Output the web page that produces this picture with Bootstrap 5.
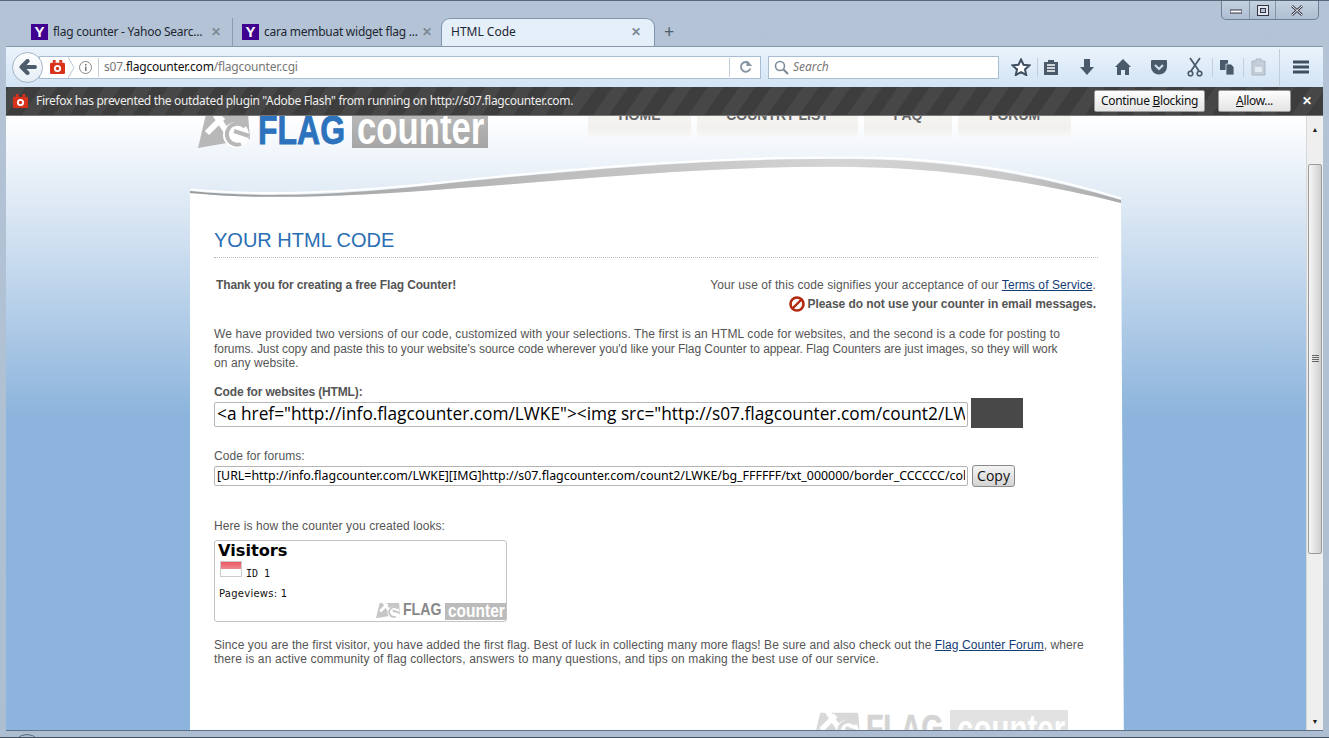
<!DOCTYPE html>
<html lang="en">
<head>
<meta charset="utf-8">
<title>HTML Code</title>
<link rel="stylesheet" href="https://cdn.jsdelivr.net/npm/bootstrap@5.3.0/dist/css/bootstrap.min.css">
<style>
html,body{height:100%;overflow:hidden}
body{font-family:"Liberation Sans",Arial,sans-serif;font-size:12px;color:#555;background:#aebfd3}
.win{width:1329px;height:738px;padding:0 6px 7px;position:relative;background:linear-gradient(#b4c4d6,#aebed2);border-top:1px solid #56677a;border-bottom:1px solid #45525f;overflow:hidden}
.ui{font-family:"Noto Sans","Open Sans",sans-serif}
.winctl{height:19px;width:98px;margin-left:1215px;border:1px solid #6d7f92;border-top:0;border-radius:0 0 5px 5px;background:linear-gradient(#c4d1df,#aebed2)}
.winctl>span{border-right:1px solid #8394a6;height:100%}
.winctl>span:last-child{border:0}
.tabs{height:28px;margin-top:-2px;padding-left:16px;color:#1d2733;font-size:12px}
.ftab{height:28px;width:210px;padding:5px 0 0 9px;white-space:nowrap;letter-spacing:-.26px}
.ftab+.ftab{border-left:1px solid #8d9cad}
.ftab.on{width:214px;margin-left:-1px;background:#e5eff9;border:1px solid #8196ab;border-bottom:0;border-radius:9px 9px 0 0;padding-left:9px;padding-top:4px;letter-spacing:0}
.ytxt{width:17px;height:16px;margin-top:1px;background:#400090;color:#fff;font:700 15px/16px "Liberation Sans",sans-serif;text-align:center;letter-spacing:0}
.tt{width:158px;margin-left:5px;overflow:hidden}
.xx{color:#7d8894;font-size:12px;font-weight:700;line-height:18px;letter-spacing:0}
.plus{margin-left:9px;font-size:18px;line-height:26px;color:#4e5e6e}
.tbar{height:41px;background:linear-gradient(#eaf3fc,#d3e4f5);border-top:1px solid #8497ab;padding:0 0 0 6px}
.backb{width:31px;height:31px;border-radius:50%;background:linear-gradient(#fff,#e4edf6);border:1px solid #a3b3c3;flex:none;z-index:1}
.urlb{height:23px;width:722px;margin-left:-4px;padding-left:10px;background:#fff;border:1px solid #a9bdd2;font-size:12px;color:#777;letter-spacing:-.2px}
.urlb b{font-weight:400;color:#111}
.sep{width:1px;height:19px;background:#c3ced9;flex:none}
.srch{width:231px;height:23px;margin-left:7px;background:#fff;border:1px solid #a9bdd2;font-style:italic;color:#777;font-size:12px;padding-left:5px}
.tools{margin-left:12px}
.tools svg{display:block;flex:none}
.noti{height:29px;background:repeating-linear-gradient(-55deg,#3d3d3d 0 13px,#474747 13px 26px);color:#eee;font-size:12px;padding:0 11px 0 7px;white-space:nowrap;border-bottom:1px solid #777;letter-spacing:-.33px}
.nbtn{height:22px;padding:0;font-size:12px;line-height:20px;border-radius:2px;background:linear-gradient(#fdfdfd,#e4e4e4);border:1px solid #999;color:#111;font-family:inherit;letter-spacing:-.33px}
.view{height:615px;overflow:hidden;border-bottom:1px solid #5f7286}
.pg{flex:1;min-width:0;background:linear-gradient(#fff,#8cb4dc 300px);overflow:hidden}
.sb{width:17px;background:#efefef;flex:none;border-left:1px solid #d8d8d8;color:#222;font-size:7px;text-align:center}
.thumb{height:390px;margin:0 1px;background:linear-gradient(90deg,#f6f6f6,#cfcfcf);border:1px solid #9a9a9a;border-radius:2px}
.top{height:47px;margin-top:-8px;padding-left:192px}
.logo{white-space:nowrap;overflow:hidden}
.fl{font-family:"Liberation Sans",sans-serif;font-weight:700;overflow:hidden;flex:none}
.sq{display:inline-block;width:max-content;transform-origin:0 50%}
.l1{height:40px;line-height:40px}
.l1 .fl1{color:#2c72bc;width:86px;margin-left:8px;font-size:40px;margin-top:2px;-webkit-text-stroke:.8px #2c72bc}
.l1 .fl1 .sq{transform:scaleX(.8)}
.l1 .fl2{color:#fff;background:linear-gradient(#bbb,#a6a6a6);width:136px;margin-left:8px;padding-left:5px;font-size:46px}
.l1 .fl2 .sq{transform:scaleX(.755)}
.menu{margin-left:100px;gap:6px}
.mi{height:29px;background:linear-gradient(#f6f5f3,#f2f1ee 70%,#f8f8f8);color:#666;font-weight:700;font-size:14px;line-height:14px;text-align:center}
.wrap{width:934px;margin-left:184px}
.wrap svg.curve{display:block}
.panel{background:#fff;padding:23px 26px 0 24px;height:560px;clip-path:polygon(0 0,931px 0,934px 100%,0 100%);overflow:hidden}
.ttl{font-size:20px;line-height:24px;color:#2a6eb4;font-weight:400;margin:0;padding-bottom:5px;border-bottom:1px dotted #bbb}
.txt{line-height:14px;letter-spacing:.085px}
.txt.fw-bold{letter-spacing:-.14px}
.txt.wide{letter-spacing:-.06px}
.ln1{letter-spacing:.11px}
.ln2{letter-spacing:-.055px}
.ln3{letter-spacing:.13px}
.cd{height:25px;width:754px;border:1px solid #b5b5b5;border-radius:2px;padding:0 2px;font-family:"Open Sans","Noto Sans",sans-serif;font-size:17.300px;color:#000;box-shadow:none;background:#fff;margin-top:3px}
.cd2{height:20px;font-size:12.400px;font-family:"Noto Sans","Open Sans",sans-serif;margin-top:0}
.blk{width:52px;height:30px;background:#484848;margin-left:3px}
.cp{height:22px;width:43px;margin-left:4px;padding:0;font-size:14px;line-height:18px;font-family:"Open Sans",sans-serif;background:linear-gradient(#f4f4f4,#d4d4d4);border:1px solid #8a8a8a;border-radius:3px;color:#111}
.cbox{width:293px;height:82px;border:1px solid #c4c4c4;border-radius:3px;padding:0 0 0 3px;font-family:"DejaVu Sans",sans-serif;color:#111}
.cv{font-size:16.200px;line-height:20px;font-weight:700;color:#000}
.flag{width:22px;height:16px;margin:0 4px 0 2px;border:1px solid #ccc;background:linear-gradient(#ea5763,#ee8a90 50%,#fff 50%)}
.mono{font-family:"DejaVu Sans Mono",monospace;font-size:10px;margin-top:7px;line-height:12px}
.pv{font-size:10px;line-height:12px;letter-spacing:.25px}
.l2{height:21px;line-height:20px;align-self:flex-end}
.l2 .fl1{color:#888;width:38px;margin-left:3px;font-size:17px}
.l2 .fl1 .sq{transform:scaleX(.83)}
.l2 .fl2{color:#fff;background:#bbb;width:61px;margin-left:4px;padding-left:3px;height:17px;line-height:16px;margin-top:3px;font-size:18px}
.l2 .fl2 .sq{transform:scaleX(.86)}
.l3{height:44px;margin-right:30px}
.l3 .fl1{color:#d4d4d4;width:79px;margin-left:6px;font-size:36px;line-height:34px;height:44px;padding-top:6px;-webkit-text-stroke:.6px #d4d4d4}
.l3 .fl1 .sq{transform:scaleX(.79)}
.l3 .fl2{color:#fff;background:#e2e2e2;width:118px;margin-left:5px;margin-top:4px;padding-left:7px;font-size:41px;line-height:38px}
.l3 .fl2 .sq{transform:scaleX(.72)}
a.lk{color:#143c74}
.arcb{position:absolute;left:12px;top:733px;width:30px;height:30px;border:1px solid #56677a;border-radius:50%}
</style>
</head>
<body>
<svg width="0" height="0" class="d-block" style="position:absolute">
<symbol id="wing" viewBox="0 0 52 34"><path d="M0 34 8 0 50 0 52 25 0 34z" fill="currentColor"/><path d="M15-3 33 24M25 3 9 19" stroke="#fff" stroke-width="6" fill="none"/><circle cx="38" cy="21" r="13" fill="#fff"/><path d="M47 13A10.500 10.500 0 1 0 43 30" fill="none" stroke="currentColor" stroke-width="4"/><path d="M36 17 51 22" stroke="currentColor" stroke-width="4"/></symbol>
<symbol id="ffi" viewBox="0 0 16 16"><rect x="0" y="3" width="16" height="12" rx="1.500" fill="#d9321c"/><rect x="3" y="0" width="3" height="3" fill="#d9321c"/><rect x="10" y="0" width="3" height="3" fill="#d9321c"/><circle cx="8" cy="9" r="3.800" fill="#fff"/><circle cx="8" cy="9" r="1.800" fill="#d9321c"/></symbol>
</svg>
<div class="win">
  <div class="winctl d-flex">
    <span class="d-flex align-items-center justify-content-center" style="width:28px"><svg width="12" height="8"><rect x="0" y="4" width="12" height="3" fill="#fff" stroke="#334"/></svg></span>
    <span class="d-flex align-items-center justify-content-center" style="width:26px"><svg width="12" height="11"><rect x=".5" y=".5" width="11" height="10" fill="#dfe6ee" stroke="#334"/><rect x="3.500" y="3.500" width="5" height="4" fill="#b4c4d6" stroke="#334"/></svg></span>
    <span class="d-flex align-items-center justify-content-center flex-grow-1"><svg width="12" height="11"><path d="M1 1l10 9M11 1 1 10" stroke="#334" stroke-width="2.400"/><path d="M1 1l10 9M11 1 1 10" stroke="#fff" stroke-width="1"/></svg></span>
  </div>
  <div class="tabs ui d-flex align-items-start">
    <div class="ftab d-flex"><span class="ytxt flex-none">Y</span><span class="tt">flag counter - Yahoo Searc...</span><span class="xx">✕</span></div>
    <div class="ftab d-flex"><span class="ytxt flex-none">Y</span><span class="tt">cara membuat widget flag ...</span><span class="xx">✕</span></div>
    <div class="ftab on d-flex"><span class="tt" style="width:180px;margin-left:0">HTML Code</span><span class="xx">✕</span></div>
    <span class="plus">+</span>
  </div>
  <div class="tbar ui d-flex align-items-center">
    <div class="backb d-flex align-items-center justify-content-center"><svg width="18" height="16" viewBox="0 0 18 16"><path d="M8.500 2 2.500 8l6 6M3 8h13" fill="none" stroke="#4d5d6e" stroke-width="4" stroke-linejoin="round" stroke-linecap="round"/></svg></div>
    <div class="urlb d-flex align-items-center">
      <svg width="15" height="15" class="flex-none"><use href="#ffi"/></svg>
      <svg width="7" height="21" class="flex-none" style="margin:0 3px"><path d="M0 0l6 10.500-6 10.500" fill="none" stroke="#bcc7d2"/></svg>
      <svg width="15" height="15" viewBox="0 0 15 15" class="flex-none"><circle cx="7.500" cy="7.500" r="6" fill="none" stroke="#8a8a8a"/><rect x="7" y="6.500" width="1.500" height="4.500" fill="#777"/><rect x="7" y="4" width="1.500" height="1.500" fill="#777"/></svg>
      <span class="sep" style="margin-left:5px"></span>
      <span class="flex-grow-1" style="margin-left:5px"><span>s07.</span><b>flagcounter.com</b><span>/flagcounter.cgi</span></span>
      <span class="sep"></span>
      <svg width="30" height="16" viewBox="0 0 31 16"><path d="M20 4.500a5 5 0 1 0 1 5" fill="none" stroke="#8896a3" stroke-width="2"/><path d="M17 1v6h6z" fill="#8896a3"/></svg>
    </div>
    <div class="srch d-flex align-items-center"><svg width="15" height="15" viewBox="0 0 15 15" class="me-1"><circle cx="6" cy="6" r="4.500" fill="none" stroke="#7e8c9a" stroke-width="1.600"/><path d="M9.500 9.500l4.500 4.500" stroke="#7e8c9a" stroke-width="2.200"/></svg>Search</div>
    <div class="tools d-flex align-items-center">
      <svg width="20" height="18" viewBox="0 0 20 18"><path d="M10 1.500l2.500 5.200 5.800.7-4.300 4 1.200 5.600L10 14.200 4.800 17l1.200-5.600-4.300-4 5.800-.7z" fill="#fff" stroke="#3f4f60" stroke-width="2"/></svg>
      <span class="sep" style="margin:0 5px 0 6px"></span>
      <svg width="16" height="18" viewBox="0 0 16 18"><path d="M1 4h4V2h6v2h4v13H1z" fill="#4a5a6b"/><path d="M4 7h8M4 10h8M4 13h8" stroke="#fff" stroke-width="1.400"/></svg>
      <svg width="16" height="18" viewBox="0 0 16 18" style="margin-left:20px"><path d="M5 1h6v8h4l-7 8-7-8h4z" fill="#4a5a6b"/></svg>
      <svg width="18" height="18" viewBox="0 0 18 18" style="margin-left:19px"><path d="M9 1 1 9h2v8h4v-5h4v5h4V9h2z" fill="#4a5a6b"/></svg>
      <svg width="18" height="16" viewBox="0 0 18 16" style="margin-left:18px"><path d="M2 1h14a1 1 0 0 1 1 1v6a8 7.500 0 0 1-16 0V2a1 1 0 0 1 1-1z" fill="#4a5a6b"/><path d="M5 6l4 4 4-4" fill="none" stroke="#cfdcea" stroke-width="2.200"/></svg>
      <svg width="16" height="20" viewBox="0 0 16 20" style="margin-left:19px"><path d="M3 1l9 13M13 1 4 14" stroke="#4a5a6b" stroke-width="1.800"/><circle cx="3.500" cy="16.500" r="2.300" fill="none" stroke="#4a5a6b" stroke-width="1.600"/><circle cx="12.500" cy="16.500" r="2.300" fill="none" stroke="#4a5a6b" stroke-width="1.600"/></svg>
      <span class="sep" style="margin:0 7px 0 9px"></span>
      <svg width="15" height="16" viewBox="0 0 15 16"><rect x="0" y="1" width="8" height="10" fill="#4a5a6b"/><path d="M6 5h5l3 3v8H6z" fill="#4a5a6b" stroke="#dbe8f5" stroke-width=".8"/></svg>
      <span class="sep" style="margin:0 7px 0 8px"></span>
      <svg width="15" height="18" viewBox="0 0 15 18"><path d="M1 3h4V1h5v2h4v14H1z" fill="#c5ced8" stroke="#aab6c2"/><path d="M4 9h7v5H4z" fill="#e4ebf2"/></svg>
      <span class="sep" style="margin:0 13px;height:37px"></span>
      <svg width="16" height="14" viewBox="0 0 16 14"><path d="M0 2h16M0 7h16M0 12h16" stroke="#3f4f60" stroke-width="3"/></svg>
    </div>
  </div>
  <div class="noti ui d-flex align-items-center">
    <svg width="15" height="15" class="flex-none"><use href="#ffi"/></svg>
    <span class="ms-2 flex-grow-1">Firefox has prevented the outdated plugin "Adobe Flash" from running on http://s07.flagcounter.com.</span>
    <button type="button" class="btn nbtn" style="width:111px"><span>Continue <u>B</u>locking</span></button>
    <button type="button" class="btn nbtn" style="width:73px;margin-left:13px"><u>A</u>llow...</button>
    <span class="fw-bold" style="margin-left:11px;width:10px;font-size:12px;color:#fff">✕</span>
  </div>
  <div class="view d-flex">
    <div class="pg">
      <div class="top d-flex align-items-start">
        <div class="logo l1 d-flex">
          <svg width="52" height="40" viewBox="0 -6 52 40" class="flex-none" style="color:#b8b8b8"><use href="#wing" width="52" height="34"/></svg>
          <span class="fl fl1"><span class="sq">FLAG</span></span><span class="fl fl2"><span class="sq">counter</span></span>
        </div>
        <div class="menu d-flex">
          <div class="mi" style="width:103px">HOME</div>
          <div class="mi" style="width:161px">COUNTRY LIST</div>
          <div class="mi" style="width:88px">FAQ</div>
          <div class="mi" style="width:113px">FORUM</div>
        </div>
      </div>
      <div class="wrap">
        <svg class="curve" width="934" height="50" viewBox="190 155 934 50">
          <defs><linearGradient id="sw" x1="0" x2="1" y1="0" y2="0"><stop offset="0" stop-color="#999"/><stop offset=".3" stop-color="#b6b6b6"/><stop offset=".7" stop-color="#d4d4d4"/><stop offset=".88" stop-color="#c8c8c8"/><stop offset="1" stop-color="#a8a8a8"/></linearGradient></defs>
          <path d="M190 193C260 200 350 197 460 188 600 178 720 165 854 167 950 168 1040 183 1121 203V205H190Z" fill="#fff"/>
          <path d="M190 189.500C260 196 340 194 460 180.500 600 166 720 156.500 854 157.500 950 158 1040 173 1121 198.500" fill="none" stroke="#fff" stroke-width="2"/>
          <path d="M190 191C260 198 340 196 460 182 600 168 720 158 854 159 950 160 1040 175 1121 200V203C1040 183 950 168 854 167 720 165 600 178 460 188 350 197 260 200 190 193Z" fill="url(#sw)"/>
        </svg>
        <div class="panel d-flex flex-column">
          <h1 class="ttl">YOUR HTML CODE</h1>
          <div class="d-flex justify-content-between" style="margin-top:20px">
            <div class="txt fw-bold" style="margin-left:2px">Thank you for creating a free Flag Counter!</div>
            <div class="text-end" style="margin-right:2px">
              <div class="txt">Your use of this code signifies your acceptance of our <a href="#" class="lk">Terms of Service</a>.</div>
              <div class="txt fw-bold wide d-flex align-items-center justify-content-end" style="margin-top:4px">
                <svg width="16" height="16" viewBox="0 0 16 16" class="flex-none" style="margin-right:3px"><circle cx="8" cy="8" r="6.500" fill="#fff" stroke="#b0280e" stroke-width="2.600"/><path d="M4 12 12 4" stroke="#b0280e" stroke-width="2.400"/></svg>Please do not use your counter in email messages.
              </div>
            </div>
          </div>
          <p class="txt mb-0" style="margin-top:15px;line-height:14.500px"><span class="ln1">We have provided two versions of our code, customized with your selections. The first is an HTML code for websites, and the second is a code for posting to</span><br><span class="ln2">forums. Just copy and paste this to your website's source code wherever you'd like your Flag Counter to appear. Flag Counters are just images, so they will work</span><br>on any website.</p>
          <div class="txt fw-bold" style="margin-top:14px">Code for websites (HTML):</div>
          <div class="d-flex align-items-center" style="margin-top:-1px">
            <input class="form-control cd flex-none" type="text" readonly value='&lt;a href="http://info.flagcounter.com/LWKE"&gt;&lt;img src="http://s07.flagcounter.com/count2/LWKE/bg_FFFFFF/txt_000000/'>
            <div class="blk"></div>
          </div>
          <div class="txt" style="margin-top:21px">Code for forums:</div>
          <div class="d-flex align-items-center" style="margin-top:2px">
            <input class="form-control cd cd2 flex-none" type="text" readonly value="[URL=http://info.flagcounter.com/LWKE][IMG]http://s07.flagcounter.com/count2/LWKE/bg_FFFFFF/txt_000000/border_CCCCCC/columns_2/">
            <button type="button" class="btn cp">Copy</button>
          </div>
          <div class="txt" style="margin-top:32px">Here is how the counter you created looks:</div>
          <div class="cbox d-flex flex-column" style="margin-top:7px">
            <div class="cv">Visitors</div>
            <div class="d-flex align-items-start"><span class="flag"></span><span class="mono">ID 1</span></div>
            <div class="pv" style="margin:8px 0 0 1px">Pageviews: 1</div>
            <div class="logo l2 d-flex mt-auto">
              <svg width="24" height="21" viewBox="0 0 52 34" class="flex-none" style="color:#c6c6c6"><use href="#wing" width="52" height="34"/></svg>
              <span class="fl fl1"><span class="sq">FLAG</span></span><span class="fl fl2"><span class="sq">counter</span></span>
            </div>
          </div>
          <p class="txt mb-0" style="margin-top:16px">Since you are the first visitor, you have added the first flag. Best of luck in collecting many more flags! Be sure and also check out the <a href="#" class="lk">Flag Counter Forum</a>, where <span class="ln3">there is an active community of flag collectors, answers to many questions, and tips on making the best use of our service.</span></p>
          <div class="logo l3 d-flex align-self-end" style="margin-top:40px">
            <svg width="47" height="44" viewBox="0 0 52 48" class="flex-none" style="color:#d8d8d8"><use href="#wing" width="52" height="48"/></svg>
            <span class="fl fl1"><span class="sq">FLAG</span></span><span class="fl fl2"><span class="sq">counter</span></span>
          </div>
        </div>
      </div>
    </div>
    <div class="sb d-flex flex-column align-items-stretch">
      <div style="height:27px;line-height:27px">▲</div>
      <div style="height:21px"></div>
      <div class="thumb d-flex align-items-center justify-content-center"><svg width="7" height="8"><path d="M0 .5h7M0 2.500h7M0 4.500h7M0 6.500h7" stroke="#666"/></svg></div>
      <div class="mt-auto" style="height:16px;line-height:16px">▼</div>
    </div>
  </div>
  <span class="arcb"></span>
</div>
<script src="https://cdn.jsdelivr.net/npm/bootstrap@5.3.0/dist/js/bootstrap.bundle.min.js"></script>
</body>
</html>
